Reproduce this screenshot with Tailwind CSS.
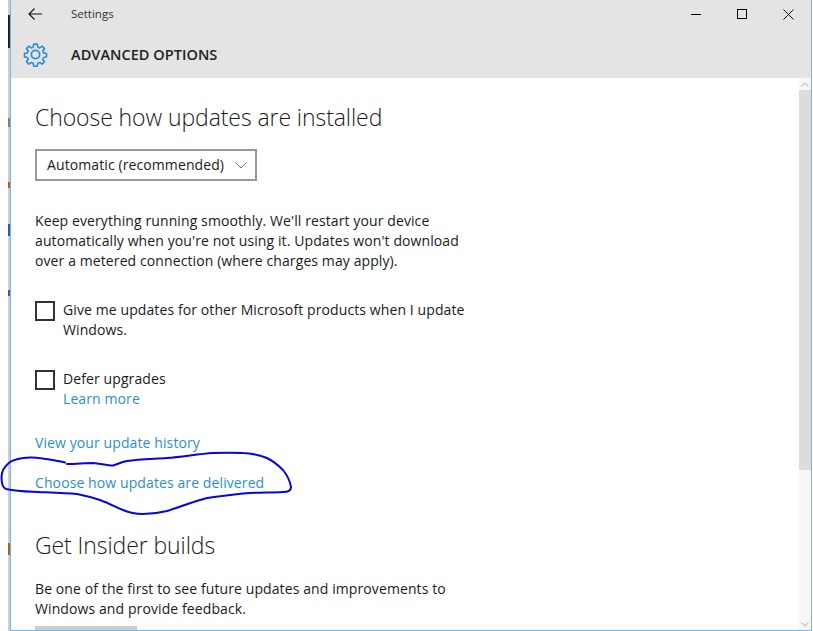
<!DOCTYPE html>
<html lang="en">
  <head>
    <meta charset="UTF-8" />
    <title>Settings</title>
    <script src="https://cdn.jsdelivr.net/npm/@tailwindcss/browser@4"></script>
  </head>
  <body class="bg-white">
    <div class="relative flex h-[631px] w-[813px] overflow-hidden bg-white font-['Open_Sans',sans-serif] text-[#1a1a1a]">
      <!-- desktop showing behind the window -->
      <div class="flex h-full w-[10px] flex-col items-end">
        <div class="flex h-full w-[2px] flex-col bg-[#cfcfcf]">
          <div class="mt-[15px] h-[33px] bg-[#222]"></div>
          <div class="mt-[70px] h-[9px] bg-[#97795c]"></div>
          <div class="mt-[55px] h-[6px] bg-[#a8640f]"></div>
          <div class="mt-[36px] h-[12px] bg-[#2f5f9f]"></div>
          <div class="mt-[54px] h-[6px] bg-[#4a5a8a]"></div>
          <div class="mt-[247px] h-[12px] bg-[#9a6a20]"></div>
        </div>
      </div>

      <div class="flex h-full w-[802px] flex-col border-x border-b border-[#6fbcec]">
        <!-- title bar -->
        <header class="h-[78px] shrink-0 bg-[#e4e4e4]">
          <div class="flex h-[28px] items-center">
            <svg class="ml-[17px] h-[14px] w-[14px]" viewBox="0 0 14 14" fill="none" stroke="#111" stroke-width="1.1">
              <path d="M1 7h13M6.5 1.500 1 7l5.500 5.500" />
            </svg>
            <span class="ml-[29px] text-[11.500px] text-[#333]">Settings</span>
            <div class="ml-auto flex items-center">
              <div class="h-[1px] w-[10px] bg-black"></div>
              <div class="ml-[36px] h-[10px] w-[10px] border border-black"></div>
              <svg class="mr-[17px] ml-[36px] h-[11px] w-[11px]" viewBox="0 0 11 11" stroke="#111" stroke-width="1">
                <path d="M.5.500l10 10M10.500.500l-10 10" />
              </svg>
            </div>
          </div>
          <div class="flex h-[50px] items-center pt-[3px]">
            <svg class="ml-[12px] h-[25px] w-[25px]" viewBox="0 0 24 24" fill="none" stroke="#2b8fd4" stroke-width="1.700" stroke-linejoin="round">
              <circle cx="12" cy="12" r="4" />
              <path d="M10.200 1.500h3.600l.6 3.100 1.900.8 2.600-1.800 2.500 2.500-1.800 2.600.8 1.900 3.100.6v3.600l-3.100.6-.8 1.900 1.800 2.600-2.500 2.500-2.600-1.800-1.900.8-.6 3.100h-3.600l-.6-3.100-1.900-.8-2.600 1.800-2.500-2.500 1.800-2.600-.8-1.900-3.100-.6v-3.600l3.100-.6.8-1.900-1.800-2.600 2.500-2.500 2.600 1.800 1.900-.8z" transform="translate(12 12) scale(.92) translate(-12 -12.300)" />
            </svg>
            <h1 class="mt-[1px] ml-[23px] text-[14.500px] font-semibold tracking-[0.05px] text-[#222]">ADVANCED OPTIONS</h1>
          </div>
        </header>

        <div class="flex min-h-0 flex-1">
          <!-- page content -->
          <main class="min-w-0 flex-1 overflow-hidden pl-[24px]">
            <h2 class="mt-[21px] text-[23px] leading-[36px] font-light tracking-[-0.08px]">Choose how updates are installed</h2>
            <div class="mt-[14px] flex h-[32px] w-[222px] items-center justify-between border-2 border-[#999] pr-[8px] pb-[2px] pl-[10px] text-[14px] tracking-[0.1px]">
              <span>Automatic (recommended)</span>
              <svg class="mt-[2px] h-[7px] w-[12px]" viewBox="0 0 12 7" fill="none" stroke="#777"><path d="m.5.500 5.500 5.500 5.500-5.500" /></svg>
            </div>
            <p class="mt-[30px] w-[460px] text-[14px] leading-[20px] tracking-[0.1px]">
              Keep everything running smoothly. We'll restart your device<br />automatically when you're not using it. Updates won't download<br />over a metered connection (where charges may apply).
            </p>
            <label class="mt-[29px] flex">
              <span class="mt-[1px] h-[20px] w-[20px] shrink-0 border-2 border-[#333]"></span>
              <span class="ml-[8px] text-[14px] leading-[20px] tracking-[0.1px]">Give me updates for other Microsoft products when I update<br />Windows.</span>
            </label>
            <label class="mt-[29px] flex">
              <span class="mt-[1px] h-[20px] w-[20px] shrink-0 border-2 border-[#333]"></span>
              <span class="ml-[8px] text-[14px] leading-[20px] tracking-[0.1px]">Defer upgrades<br /><a class="text-[#2b8fcf]">Learn more</a></span>
            </label>
            <a class="mt-[24px] block text-[14px] leading-[20px] tracking-[0.1px] text-[#2b8fcf]">View your update history</a>
            <a class="mt-[20px] block text-[14px] leading-[20px] tracking-[0.1px] text-[#2b8fcf]">Choose how updates are delivered</a>
            <h2 class="mt-[34px] text-[23px] leading-[36px] font-light tracking-[-0.08px]">Get Insider builds</h2>
            <p class="mt-[16px] w-[460px] text-[14px] leading-[20px] tracking-[0.1px]">
              Be one of the first to see future updates and improvements to<br />Windows and provide feedback.
            </p>
            <div class="mt-[7px] h-[20px] w-[102px] bg-[#cccccc]"></div>
          </main>

          <!-- scrollbar -->
          <div class="flex w-[12px] shrink-0 flex-col bg-[#f7f7f7]">
            <div class="flex h-[12px] items-center justify-center">
              <svg class="h-[5px] w-[8px]" viewBox="0 0 8 5" fill="none" stroke="#cfcfcf" stroke-width="1.500"><path d="m.5 4.500 3.500-3.500 3.500 3.500" /></svg>
            </div>
            <div class="h-[380px] bg-[#dcdcdc]"></div>
            <div class="mt-auto flex h-[12px] items-center justify-center">
              <svg class="h-[5px] w-[8px]" viewBox="0 0 8 5" fill="none" stroke="#cfcfcf" stroke-width="1.500"><path d="m.5.500 3.500 3.500 3.500-3.500" /></svg>
            </div>
          </div>
        </div>
      </div>

      <!-- pen annotation drawn over the screenshot -->
      <svg class="pointer-events-none absolute top-0 left-0 h-[631px] w-[813px]" viewBox="0 0 813 631" fill="none" stroke="#0505dc" stroke-width="2" stroke-linecap="round">
        <path d="M65 462.500C52 460 40 457 30 457.500C20 458 13 460 10 462C5 466 1.500 472 1.500 477C1.500 484 3 488 6 489C15 491 25 491.500 33 491.700C50 492.500 65 493 77 494C87 496 94 498 100 500C108 503 116 507 123 510C130 513 136 514 143 514C151 514 159 513 167 511C180 507 195 501 207 498C222 496 236 494 250 493C262 492.500 274 492.500 283 492C288 492 291 490 291 487C290 481 287 475 283 470C278 465 273 461 267 458C259 455 251 453 243 453C233 452.500 223 452.500 213 453C198 454 182 457 167 458C153 459 139 459.500 127 461C121 462 118 464 113 465.500C107 465.500 100 463.500 93 463C85 463 76 464 67 464" />
      </svg>
    </div>
  </body>
</html>
